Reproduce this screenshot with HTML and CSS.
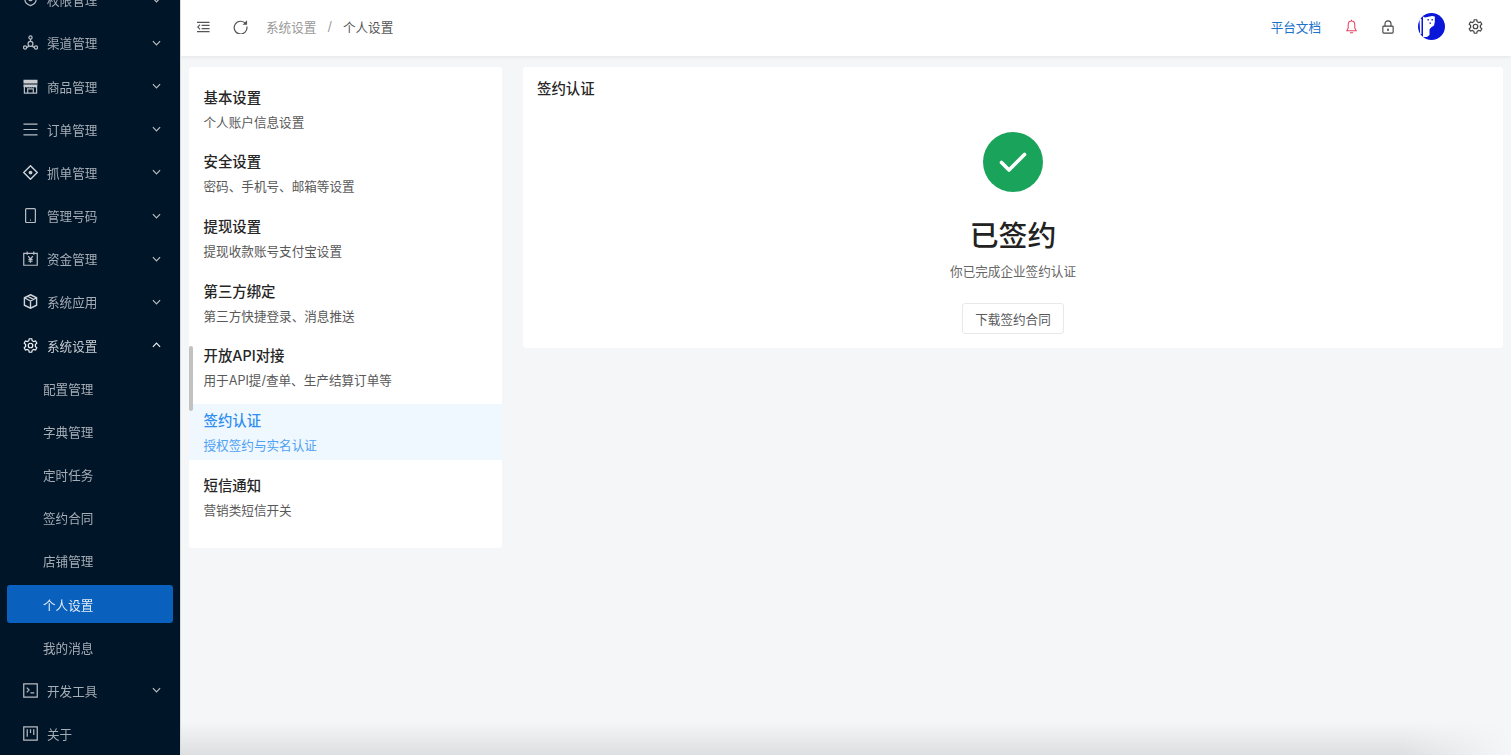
FILE: index.html
```html
<!DOCTYPE html>
<html lang="zh-CN">
<head>
<meta charset="utf-8">
<title>个人设置</title>
<link rel="stylesheet" href="styles.css">
</head>
<body>
<div class="app">
  <aside class="sidebar">
    <nav class="menu">
      <div class="item"><svg class="ico" viewBox="0 0 16 16"><path d="M8 1.500 14 3.500V8c0 3.200-2.600 5.400-6 6.500C4.600 13.400 2 11.200 2 8V3.500z"/><circle cx="8" cy="7.500" r="1.800"/></svg><span class="label">权限管理</span><svg class="arrow" viewBox="0 0 10 6"><path d="M1 1l4 4 4-4"/></svg></div>
      <div class="item"><svg class="ico" viewBox="0 0 16 16"><circle cx="8" cy="2.600" r="1.700"/><circle cx="2.200" cy="13.400" r="1.700"/><circle cx="13.800" cy="13.400" r="1.700"/><circle cx="8" cy="9.500" r="2.600"/><path d="M8 4.300V7M3.900 13.400c1-.2 1.800-1 2.400-2M12.100 13.400c-1-.2-1.800-1-2.400-2"/></svg><span class="label">渠道管理</span><svg class="arrow" viewBox="0 0 10 6"><path d="M1 1l4 4 4-4"/></svg></div>
      <div class="item"><svg class="ico" viewBox="0 0 16 16"><path class="solid" d="M.5 .8h15v4H.5zM.5 5.800h15L15 8.400c-.8.800-1.800.8-2.500 0-.8.800-1.800.8-2.500 0-.8.800-1.700.8-2 0-.8.800-1.700.8-2.500 0-.8.800-1.700.8-2.500 0-.8.800-1.900.6-2.500-.2z"/><path d="M1.500 8v7h13V8M5 15v-4.500h6V15"/></svg><span class="label">商品管理</span><svg class="arrow" viewBox="0 0 10 6"><path d="M1 1l4 4 4-4"/></svg></div>
      <div class="item"><svg class="ico" viewBox="0 0 16 16"><path d="M.5 2.200h15M.5 8h15M.5 13.800h15"/></svg><span class="label">订单管理</span><svg class="arrow" viewBox="0 0 10 6"><path d="M1 1l4 4 4-4"/></svg></div>
      <div class="item"><svg class="ico ico-strong" viewBox="0 0 16 16"><path d="M8 .8 15.200 8 8 15.200 .8 8z"/><circle class="solid" cx="8" cy="8" r="2"/></svg><span class="label">抓单管理</span><svg class="arrow" viewBox="0 0 10 6"><path d="M1 1l4 4 4-4"/></svg></div>
      <div class="item"><svg class="ico" viewBox="0 0 16 16"><rect x="2.800" y=".7" width="10.400" height="14.800" rx="1"/><path d="M7.500 13h1"/></svg><span class="label">管理号码</span><svg class="arrow" viewBox="0 0 10 6"><path d="M1 1l4 4 4-4"/></svg></div>
      <div class="item"><svg class="ico" viewBox="0 0 16 16"><path d="M.8 2.500h14.400v12.700H.8zM4.500 .5v3.500M11.500 .5v3.500M5.500 5.500 8 8.500l2.500-3M8 8.500v4M5.800 9h4.400M5.800 10.800h4.400"/></svg><span class="label">资金管理</span><svg class="arrow" viewBox="0 0 10 6"><path d="M1 1l4 4 4-4"/></svg></div>
      <div class="item"><svg class="ico ico-strong" viewBox="0 0 16 16"><path d="M8 .8l6.500 3.200v8L8 15.200 1.500 12V4zM1.500 4 8 7.500 14.500 4M8 7.500v7.700M4.800 2.400l6.400 3.400"/></svg><span class="label">系统应用</span><svg class="arrow" viewBox="0 0 10 6"><path d="M1 1l4 4 4-4"/></svg></div>
      <div class="item open"><svg class="ico" viewBox="0 0 16 16"><path d="M6.700 .8h2.600l.5 2.100 1.500.9 2.100-.6 1.300 2.200-1.500 1.500v2.200l1.500 1.500-1.300 2.200-2.100-.6-1.500.9-.5 2.100H6.700l-.5-2.100-1.500-.9-2.100.6-1.300-2.200 1.500-1.500V6.900L1.300 5.400l1.300-2.200 2.100.6 1.500-.9z"/><circle cx="8" cy="8" r="2.400"/></svg><span class="label">系统设置</span><svg class="arrow" viewBox="0 0 10 6"><path d="M1 5l4-4 4 4"/></svg></div>
      <div class="item sub"><span class="label">配置管理</span></div>
      <div class="item sub"><span class="label">字典管理</span></div>
      <div class="item sub"><span class="label">定时任务</span></div>
      <div class="item sub"><span class="label">签约合同</span></div>
      <div class="item sub"><span class="label">店铺管理</span></div>
      <div class="item sub active"><span class="label">个人设置</span></div>
      <div class="item sub"><span class="label">我的消息</span></div>
      <div class="item"><svg class="ico" viewBox="0 0 16 16"><path d="M.8 1h14.400v14H.8zM4 5l2.500 2.500L4 10M8 10.500h4"/></svg><span class="label">开发工具</span><svg class="arrow" viewBox="0 0 10 6"><path d="M1 1l4 4 4-4"/></svg></div>
      <div class="item"><svg class="ico" viewBox="0 0 16 16"><path d="M.8 1h14.400v14H.8zM4.500 3.500v8M8 3.500v4M11.500 3.500v6"/></svg><span class="label">关于</span></div>
    </nav>
  </aside>
  <div class="main">
    <header class="topbar">
      <svg class="tool tool-indent" viewBox="0 0 14 12"><path d="M0 1h13.500M5 4.300h8.500M5 7.700h8.500M0 11h13.500M3.300 3.500 .8 6l2.500 2.500"/></svg>
      <svg class="tool tool-reload" viewBox="0 0 16 16"><path d="M13.600 5.200A6.800 6.800 0 1 0 14.800 8"/><path class="solid" d="M15 1.200v4.800h-4.800z"/></svg>
      <div class="crumbs"><span class="crumb-parent">系统设置</span><span class="crumb-sep">/</span><span class="crumb-current">个人设置</span></div>
      <div class="spacer"></div>
      <a class="doc-link">平台文档</a>
      <svg class="tool-right bell" viewBox="0 0 14 18"><path d="M7 2C3.800 2 2.800 4.600 2.800 7v4L1 14.500h12L11.200 11V7C11.200 4.600 10.200 2 7 2zM7 .5V2M5 17h4"/></svg>
      <svg class="tool-right lock" viewBox="0 0 14 16"><rect x="1" y="7" width="12" height="8.200" rx="1"/><path d="M3.500 7V4.300a3.500 3.500 0 0 1 7 0V7"/><path class="lock-key" d="M7 10v2.500"/></svg>
      <svg class="avatar" viewBox="0 0 27 27"><circle cx="13.500" cy="13.500" r="13.500" fill="#0a17d8"/><path d="M1.500 6H3.500V21H2.200z" fill="#fff"/><path d="M5 3.500 7 4.500 14 3l2.800 .5V9l-.8 3.500-3 2-1.500 2V22l-2.500 2H5z" fill="#fff"/><path d="M9.500 6h1.300v1.500H9.500zM13.500 6h1.300v1.500h-1.300zM11.500 9.500h1.500v1.200h-1.500z" fill="#0a17d8"/></svg>
      <svg class="tool-right gear" viewBox="0 0 16 16"><path d="M6.700 .8h2.600l.5 2.100 1.500.9 2.100-.6 1.300 2.200-1.500 1.500v2.200l1.500 1.500-1.300 2.200-2.100-.6-1.500.9-.5 2.100H6.700l-.5-2.100-1.500-.9-2.100.6-1.300-2.200 1.500-1.500V6.900L1.300 5.400l1.300-2.200 2.100.6 1.500-.9z"/><circle cx="8" cy="8" r="2.400"/></svg>
    </header>
    <main class="content">
      <section class="settings card">
        <div class="scroll-thumb"></div>
        <div class="set-item"><div class="set-title">基本设置</div><div class="set-desc">个人账户信息设置</div></div>
        <div class="set-item"><div class="set-title">安全设置</div><div class="set-desc">密码、手机号、邮箱等设置</div></div>
        <div class="set-item"><div class="set-title">提现设置</div><div class="set-desc">提现收款账号支付宝设置</div></div>
        <div class="set-item"><div class="set-title">第三方绑定</div><div class="set-desc">第三方快捷登录、消息推送</div></div>
        <div class="set-item"><div class="set-title">开放API对接</div><div class="set-desc">用于API提/查单、生产结算订单等</div></div>
        <div class="set-item selected"><div class="set-title">签约认证</div><div class="set-desc">授权签约与实名认证</div></div>
        <div class="set-item"><div class="set-title">短信通知</div><div class="set-desc">营销类短信开关</div></div>
      </section>
      <section class="panel card">
        <h2 class="panel-title">签约认证</h2>
        <div class="result">
          <div class="result-icon"><svg viewBox="0 0 60 60"><path d="M18.500 30.500 26 38l15.500-15.500"/></svg></div>
          <div class="result-title">已签约</div>
          <div class="result-sub">你已完成企业签约认证</div>
          <button class="btn">下载签约合同</button>
        </div>
      </section>
    </main>
  </div>
</div>
<div class="bottom-shade"></div>
</body>
</html>
```
FILE: styles.css
```css
* { box-sizing: border-box; }
html, body { margin: 0; height: 100%; overflow: hidden; }
body {
  font-family: Inter, "Noto Sans CJK SC", sans-serif;
  font-size: 12.6px;
  background: #f5f6f8;
  color: #333;
}
.app { display: flex; height: 755px; }

.sidebar { width: 180px; flex: none; background: #011528; overflow: hidden; position: relative; z-index: 2; box-shadow: 1px 0 0 #d8dce1; }
.menu { margin-top: -19.2px; padding: 0 7px; }
.item {
  height: 38px;
  margin-bottom: 5.16px;
  padding-left: 16px;
  padding-right: 12px;
  display: flex;
  align-items: center;
  color: #a6adb5;
  border-radius: 3px;
}
.ico { width: 15px; height: 15px; flex: none; margin-right: 9px; fill: none; stroke: #b8bdc3; stroke-width: 1.300; }
.ico-strong { stroke: #d0d3d7; stroke-width: 1.500; }
.ico .solid { fill: #c8ccd0; stroke: none; }
.label { flex: 1; white-space: nowrap; }
.arrow { width: 9px; height: 6px; flex: none; fill: none; stroke: #b8bdc3; stroke-width: 1.300; }
.item.open { color: #c9cdd2; }
.item.open .ico, .item.open .arrow { stroke: #f2f3f4; }
.item.sub { padding-left: 36px; }
.item.active { background: #0a60bd; color: #e6f0fa; }

.main { flex: 1; min-width: 0; display: flex; flex-direction: column; }
.topbar {
  height: 56px;
  flex: none;
  background: #fff;
  box-shadow: 0 1px 4px rgba(0, 21, 41, .08);
  display: flex;
  align-items: center;
  padding: 0 28px 3px 17px;
  position: relative;
}
.tool { fill: none; stroke: #555; stroke-width: 1.200; flex: none; }
.tool .solid { fill: #555; stroke: none; }
.tool-indent { width: 13px; height: 12px; margin-right: 23px; }
.tool-reload { width: 15px; height: 15px; margin-right: 18px; stroke-width: 1.300; }
.crumbs { display: flex; align-items: center; }
.crumb-parent { color: #999; }
.crumb-sep { color: #999; margin: 0 11px; }
.crumb-current { color: #555; }
.spacer { flex: 1; }
.doc-link { color: #1b72c8; margin-right: 25px; }
.tool-right { flex: none; fill: none; stroke-width: 1.300; }
.bell { width: 11px; height: 15px; stroke: #e6405f; margin-right: 25px; }
.lock { width: 12px; height: 14px; stroke: #444; margin-right: 24px; }
.lock-key { stroke-width: 2; }
.avatar { width: 27px; height: 27px; flex: none; margin-right: 23px; }
.gear { width: 15px; height: 15px; stroke: #444; }

.content { flex: 1; display: flex; align-items: flex-start; gap: 21px; padding: 11px 8px 0 9px; }
.card { background: #fff; border-radius: 3px; }
.settings { width: 313px; flex: none; padding: 13.500px 0 23.600px; position: relative; }
.scroll-thumb { position: absolute; left: 0; top: 279px; width: 4px; height: 65px; border-radius: 2px; background: #c2c2c2; }
.set-item { height: 56.200px; margin-bottom: 8.500px; padding: 6px 15px 0 14.500px; }
.set-item:last-child { margin-bottom: 0; }
.set-title { font-size: 14.400px; font-weight: 500; line-height: 21px; color: #262626; }
.set-desc { line-height: 18px; margin-top: 6px; color: #595959; }
.set-item.selected { background: #f0f8ff; }
.set-item.selected .set-title { color: #2f8ef0; }
.set-item.selected .set-desc { color: #4ea1f3; }

.panel { flex: 1; min-width: 0; height: 281px; padding: 0 14px; }
.panel-title { margin: 0; font-size: 14.400px; font-weight: 500; line-height: 44px; color: #262626; }
.result { display: flex; flex-direction: column; align-items: center; padding-top: 21px; }
.result-icon { width: 60px; height: 60px; border-radius: 50%; background: #1aa35b; }
.result-icon svg { display: block; width: 60px; height: 60px; fill: none; stroke: #fff; stroke-width: 3.600; stroke-linecap: round; stroke-linejoin: round; }
.result-title { font-size: 28.800px; font-weight: 500; line-height: 40px; margin-top: 24px; color: #222; }
.result-sub { line-height: 18px; margin-top: 6.500px; color: #666; }
.btn {
  margin-top: 22.500px;
  width: 102px;
  height: 31px;
  padding: 0;
  background: #fff;
  border: 1px solid #e8e8e8;
  border-radius: 3px;
  font: inherit;
  color: #595959;
}
.bottom-shade {
  position: fixed;
  left: 180px;
  right: 0;
  bottom: 0;
  height: 34px;
  pointer-events: none;
  background: linear-gradient(to bottom, rgba(0, 0, 0, 0), rgba(0, 0, 0, .09));
  -webkit-mask-image: linear-gradient(to left, transparent 0, #000 110px);
  mask-image: linear-gradient(to left, transparent 0, #000 110px);
}
```
